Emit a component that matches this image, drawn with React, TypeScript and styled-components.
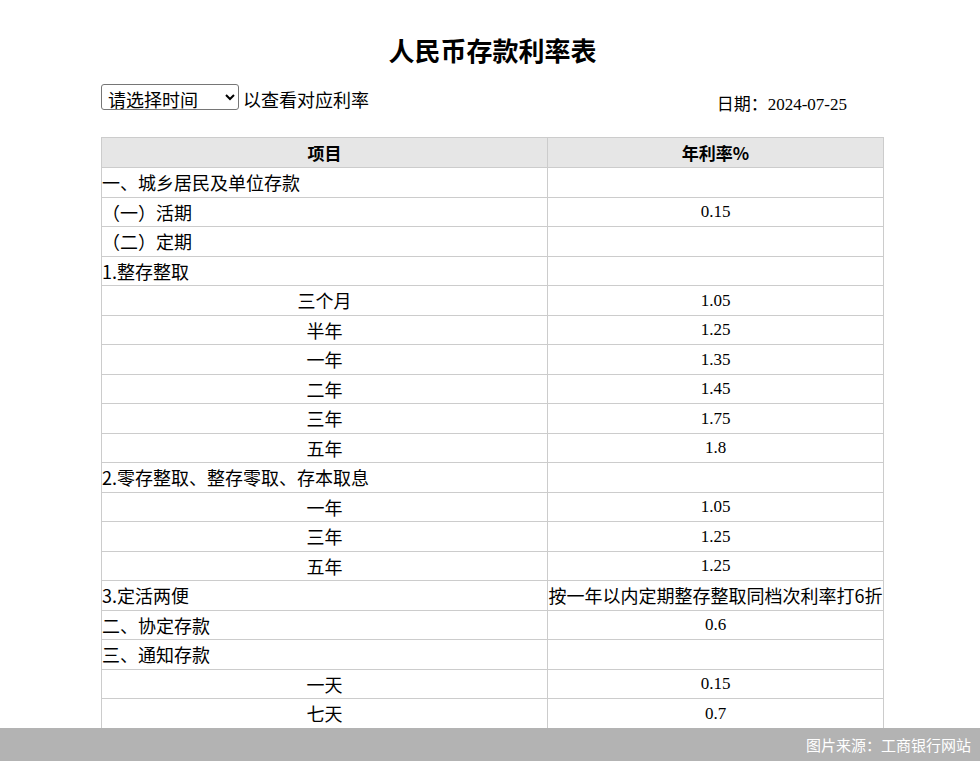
import styled, { createGlobalStyle } from "styled-components";

const Global = createGlobalStyle`
  body { margin: 0; background: #fff; font-family: "Noto Sans CJK SC", sans-serif; color: #000; }
`;

const Page = styled.div`
  width: 783px;
  margin-left: 101px;
  padding-top: 30px;
`;

const Title = styled.h1`
  margin: 0;
  text-align: center;
  font-size: 26px;
  font-weight: 700;
  line-height: 40px;
`;

const Toolbar = styled.div`
  display: flex;
  align-items: center;
  justify-content: space-between;
  height: 30px;
  margin-top: 13px;
  font-size: 18px;
`;

const Select = styled.select`
  font-family: "Noto Sans CJK SC", sans-serif;
  font-size: 18px;
  height: 26px;
  width: 138px;
  padding: 0 2px;
  border: 1px solid #767676;
  border-radius: 3px;
  background: #fff;
  margin-right: 4px;
`;

const DateText = styled.span`
  font-family: "Liberation Serif", "Noto Sans CJK SC", serif;
  font-size: 17px;
  margin-right: 37px;
  margin-top: 8px;
`;

const Table = styled.table`
  width: 783px;
  margin-top: 24px;
  border-collapse: collapse;
  table-layout: fixed;
  font-size: 18px;
`;

const Th = styled.th`
  height: 29px;
  padding: 0;
  background: #e6e6e6;
  border: 1px solid #ccc;
  font-weight: 700;
  font-size: 17px;
`;

const Td = styled.td<{ $center?: boolean; $serif?: boolean }>`
  height: 28.5px;
  padding: 0;
  border: 1px solid #ccc;
  text-align: ${(p) => (p.$center ? "center" : "left")};
  font-size: ${(p) => (p.$serif ? "17px" : "18px")};
  font-family: ${(p) =>
    p.$serif ? `"Liberation Serif", "Noto Sans CJK SC", serif` : `"Noto Sans CJK SC", sans-serif`};
  white-space: nowrap;
  line-height: 1;
`;

const Footer = styled.div`
  position: fixed;
  left: 0;
  right: 0;
  bottom: 0;
  height: 33px;
  background: #b3b3b3;
  color: #fff;
  font-size: 15px;
  display: flex;
  align-items: center;
  justify-content: flex-end;
  padding-right: 9px;
`;

const rows: [string, string, boolean][] = [
  ["一、城乡居民及单位存款", "", false],
  ["（一）活期", "0.15", false],
  ["（二）定期", "", false],
  ["1.整存整取", "", false],
  ["三个月", "1.05", true],
  ["半年", "1.25", true],
  ["一年", "1.35", true],
  ["二年", "1.45", true],
  ["三年", "1.75", true],
  ["五年", "1.8", true],
  ["2.零存整取、整存零取、存本取息", "", false],
  ["一年", "1.05", true],
  ["三年", "1.25", true],
  ["五年", "1.25", true],
  ["3.定活两便", "按一年以内定期整存整取同档次利率打6折", false],
  ["二、协定存款", "0.6", false],
  ["三、通知存款", "", false],
  ["一天", "0.15", true],
  ["七天", "0.7", true],
];

export default function App() {
  return (
    <>
      <Global />
      <Page>
        <Title>人民币存款利率表</Title>
        <Toolbar>
          <div>
            <Select defaultValue="">
              <option value="">请选择时间</option>
            </Select>
            以查看对应利率
          </div>
          <DateText>日期：2024-07-25</DateText>
        </Toolbar>
        <Table>
          <thead>
            <tr>
              <Th style={{ width: 445 }}>项目</Th>
              <Th>年利率%</Th>
            </tr>
          </thead>
          <tbody>
            {rows.map(([name, rate, center], i) => (
              <tr key={i}>
                <Td $center={center}>{name}</Td>
                <Td $center $serif={!rate.startsWith("按")}>{rate}</Td>
              </tr>
            ))}
          </tbody>
        </Table>
      </Page>
      <Footer>图片来源：工商银行网站</Footer>
    </>
  );
}
